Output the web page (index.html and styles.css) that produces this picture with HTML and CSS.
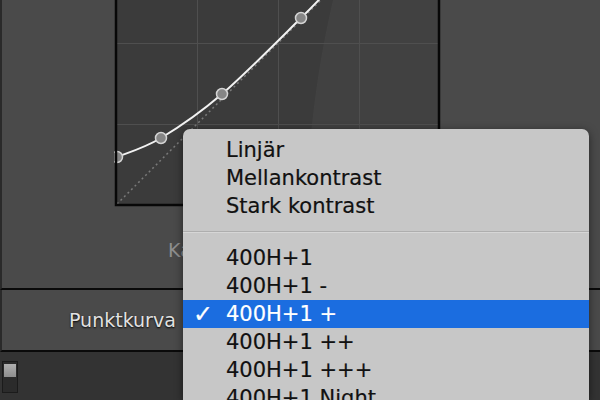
FILE: index.html
```html
<!DOCTYPE html>
<html lang="sv">

<head>
    <meta charset="UTF-8">
    <meta name="viewport" content="width=device-width, initial-scale=1.0">
    <title>Tonkurva</title>
    <link rel="stylesheet" href="styles.css">
</head>

<body>
    <div class="panel">
        <div class="curve-area">
            <!-- Tone curve graph, top is scrolled out of view -->
            <svg class="curve" width="328" height="207" viewBox="0 0 328 207">
                <rect x="3" y="0" width="322" height="204" fill="#3b3b3b" />
                <path d="M219,0 C205,60 196,120 192,204 L324,204 L324,0 Z" fill="#ffffff" opacity="0.035" />
                <g stroke="#4f4f4f" stroke-width="1">
                    <line x1="83.5" y1="0" x2="83.5" y2="204" />
                    <line x1="164.5" y1="0" x2="164.5" y2="204" />
                    <line x1="245.5" y1="0" x2="245.5" y2="204" />
                    <line x1="3" y1="43.5" x2="324" y2="43.5" />
                    <line x1="3" y1="124.5" x2="324" y2="124.5" />
                </g>
                <line x1="3" y1="204" x2="327" y2="-120" stroke="#7a7a7a" stroke-width="1.5" stroke-dasharray="2 3" />
                <path d="M3,157 C10.3,153.8 29.5,148.5 47,138 C64.5,127.5 84.7,114 108,94 C131.3,74 169,35.7 187,18 C205,0.3 211.2,-7 216,-12"
                    fill="none" stroke="#f2f2f2" stroke-width="2" />
                <g fill="#858585" stroke="#d4d4d4" stroke-width="1.5">
                    <circle cx="3" cy="157" r="5.5" />
                    <circle cx="47" cy="138" r="5.5" />
                    <circle cx="108" cy="94" r="5.5" />
                    <circle cx="187" cy="18" r="5.5" />
                </g>
                <!-- frame -->
                <path d="M2,0 L2,205 L325,205 L325,0" fill="none" stroke="#080808" stroke-width="2.5" />
            </svg>
            <div class="channel">Kanal</div>
        </div>

        <div class="curve-row">
            <span class="row-label">Punktkurva</span>
        </div>

        <div class="footer">
            <span class="swatch"><span class="swatch-top"></span></span>
        </div>

        <!-- Preset popup menu -->
        <ul class="menu">
            <li class="item"><span class="check"></span>Linjär</li>
            <li class="item"><span class="check"></span>Mellankontrast</li>
            <li class="item"><span class="check"></span>Stark kontrast</li>
            <li class="separator"></li>
            <li class="item"><span class="check"></span>400H+1</li>
            <li class="item"><span class="check"></span>400H+1 -</li>
            <li class="item selected"><span class="check">✓</span>400H+1 +</li>
            <li class="item"><span class="check"></span>400H+1 ++</li>
            <li class="item"><span class="check"></span>400H+1 +++</li>
            <li class="item"><span class="check"></span>400H+1 Night</li>
        </ul>
    </div>
</body>

</html>
```

FILE: styles.css
```css
body {
    margin: 0;
    width: 600px;
    height: 400px;
    overflow: hidden;
    background: #333333;
    font-family: "DejaVu Sans", sans-serif;
}

.panel {
    position: relative;
    width: 600px;
    height: 400px;
    overflow: hidden;
}

.curve-area {
    height: 290px;
    background: #4a4a4a;
    border-left: 2px solid #2a2a2a;
    border-bottom: 2px solid #0a0a0a;
    padding-left: 112px;
    box-sizing: border-box;
}

.curve {
    display: block;
}

.channel {
    margin-top: 32px;
    padding-left: 54px;
    font-size: 19px;
    color: #8f8f8f;
}

.curve-row {
    height: 60px;
    background: #4a4a4a;
    border-left: 2px solid #2a2a2a;
    border-bottom: 2px solid #0a0a0a;
    display: flex;
    align-items: center;
    padding-left: 67px;
}

.row-label {
    font-size: 19px;
    color: #e2e2e2;
    text-shadow: 0 1px 2px #000;
}

.footer {
    height: 48px;
    padding: 9px 0 0 2px;
    box-sizing: border-box;
}

.swatch {
    display: block;
    width: 14px;
    height: 30px;
    border: 1px solid #1b1b1b;
    background: #2b2b2b;
}

.swatch-top {
    display: block;
    height: 13px;
    margin: 2px 1px 0;
    background: linear-gradient(to bottom, #b0b0b0, #8e8e8e);
}

.menu {
    position: absolute;
    left: 183px;
    top: 129px;
    width: 406px;
    height: 271px;
    margin: 0;
    padding: 7px 0 0;
    list-style: none;
    background: #c7c7c7;
    border-radius: 7px 7px 0 0;
    box-shadow: 0 2px 8px rgba(0, 0, 0, 0.5);
    box-sizing: border-box;
    overflow: hidden;
}

.item {
    display: flex;
    height: 28px;
    line-height: 28px;
    font-size: 21px;
    color: #111111;
    -webkit-text-stroke: 0.2px #111111;
}

.check {
    width: 43px;
    padding-left: 10px;
    box-sizing: border-box;
    font-size: 24px;
    font-weight: bold;
}

.selected {
    background: #1b6de0;
    color: #ffffff;
    -webkit-text-stroke: 0.2px #ffffff;
}

.separator {
    height: 0;
    margin: 11px 0;
    border-top: 1px solid #aeaeae;
    border-bottom: 1px solid #d6d6d6;
}
```
